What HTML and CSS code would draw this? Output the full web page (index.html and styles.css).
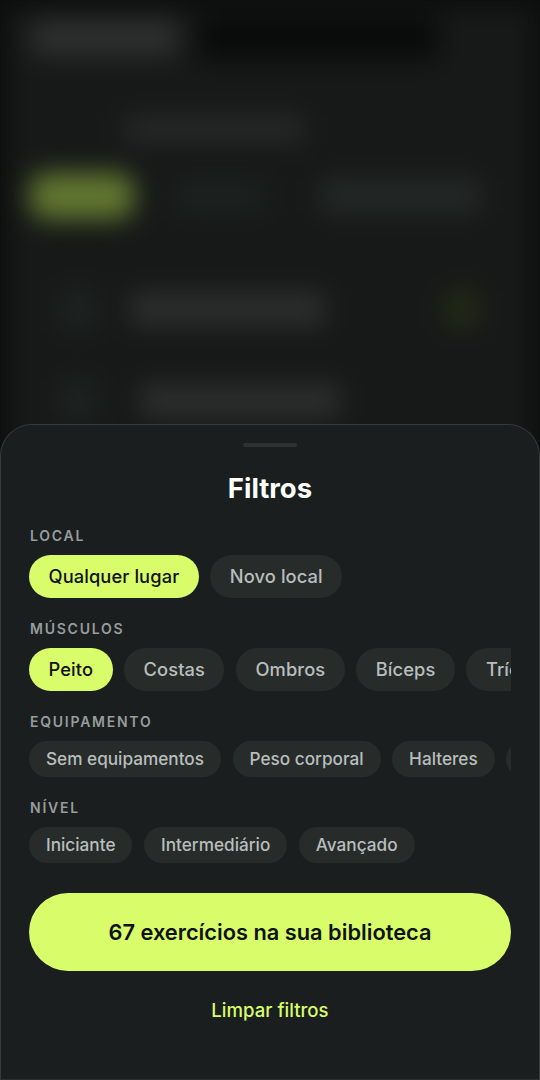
FILE: index.html
```html
<!DOCTYPE html>
<html lang="pt">
<head>
<meta charset="utf-8">
<title>Filtros</title>
<link rel="stylesheet" href="styles.css">
</head>
<body>
<div class="screen">
  <div class="backdrop" aria-hidden="true">
    <div class="bd-head"><span class="bd-title"></span><span class="bd-dark"></span></div>
    <span class="bd-sub"></span>
    <div class="bd-tabs"><span class="bd-tab-on"></span><span class="bd-tab-a"></span><span class="bd-tab-b"></span></div>
    <div class="bd-row"><span class="bd-ico"></span><span class="bd-line"></span><span class="bd-dot"></span></div>
    <div class="bd-row bd-row2"><span class="bd-ico"></span><span class="bd-line bd-line2"></span></div>
  </div>
  <section class="sheet">
    <div class="handle"></div>
    <h1 class="title">Filtros</h1>
    <h2 class="label label-local">LOCAL</h2>
    <div class="chips chips-lg">
      <span class="chip on">Qualquer lugar</span>
      <span class="chip">Novo local</span>
    </div>
    <h2 class="label">MÚSCULOS</h2>
    <div class="chips chips-lg">
      <span class="chip on">Peito</span>
      <span class="chip">Costas</span>
      <span class="chip">Ombros</span>
      <span class="chip">Bíceps</span>
      <span class="chip">Tríceps</span>
    </div>
    <h2 class="label">EQUIPAMENTO</h2>
    <div class="chips chips-sm">
      <span class="chip">Sem equipamentos</span>
      <span class="chip">Peso corporal</span>
      <span class="chip">Halteres</span>
      <span class="chip">Barra</span>
    </div>
    <h2 class="label">NÍVEL</h2>
    <div class="chips chips-sm">
      <span class="chip">Iniciante</span>
      <span class="chip">Intermediário</span>
      <span class="chip">Avançado</span>
    </div>
    <button class="cta">67 exercícios na sua biblioteca</button>
    <a class="clear">Limpar filtros</a>
  </section>
</div>
</body>
</html>
```
FILE: styles.css
```css
* { box-sizing: border-box; }
html, body { margin: 0; padding: 0; background: #0d0f0e; }
body { font-family: "Inter", "Liberation Sans", sans-serif; }
.screen {
  position: relative;
  width: 540px;
  height: 1080px;
  overflow: hidden;
  display: flex;
  flex-direction: column;
  justify-content: flex-end;
  background: #0c0e0d;
}
.backdrop {
  position: absolute;
  inset: -10px;
  padding: 30px 10px 0;
  background: #161918;
  filter: blur(13px);
  box-shadow: inset 0 0 0 16px #0b0d0c;
}
.bd-head { display: flex; height: 36px; gap: 20px; }
.bd-title { width: 146px; margin-left: 32px; background: #2e302f; border-radius: 8px; }
.bd-dark { width: 240px; margin-top: -4px; height: 44px; background: #090b0a; }
.bd-sub { display: block; width: 180px; height: 26px; margin: 60px 0 0 124px; background: #252928; }
.bd-tabs { display: flex; align-items: center; margin-top: 30px; height: 48px; }
.bd-tab-on { width: 104px; height: 46px; margin-left: 30px; border-radius: 16px; background: #627830; }
.bd-tab-a { width: 90px; height: 32px; margin-left: 40px; background: #1c2221; }
.bd-tab-b { width: 160px; height: 32px; margin-left: 56px; background: #242928; }
.bd-row { display: flex; align-items: center; height: 50px; margin-top: 64px; }
.bd-row2 { margin-top: 42px; }
.bd-ico { width: 36px; height: 44px; margin-left: 60px; background: #1d2322; }
.bd-line { width: 195px; height: 34px; margin-left: 34px; background: #2c2e2d; }
.bd-line2 { margin-left: 44px; width: 200px; }
.bd-dot { width: 34px; height: 36px; margin-left: 120px; background: #232b14; }
.sheet {
  position: relative;
  height: 656px;
  padding: 18px 28px 0;
  background: #1a1e1f;
  border: 1px solid #353a3a;
  border-bottom-color: #2a2f2f;
  border-radius: 32px 32px 0 0;
  display: flex;
  flex-direction: column;
  align-items: stretch;
  font-family: "Inter", "Liberation Sans", sans-serif;
}
.handle { align-self: center; width: 54px; height: 4px; border-radius: 2px; background: #2d3233; }
.title { margin: 23px 0 0; height: 36px; text-align: center; color: #fff; font-size: 27.5px; font-weight: 700; line-height: 36px; }
.label { margin: 22px 0 0 1px; color: #979c9c; font-size: 14px; font-weight: 600; letter-spacing: 1.75px; line-height: 18px; }
.label-local { margin-top: 21px; }
.chips { display: flex; overflow: hidden; }
.chips-lg { gap: 11.5px; margin-top: 10px; font-size: 18.3px; letter-spacing: 0.1px; }
.chips-sm { gap: 11.5px; margin-top: 10px; font-size: 17.2px; }
.chip { flex: none; display: block; border-radius: 22px; background: #272c2b; color: #b9bebd; font-weight: 500; white-space: nowrap; }
.chips-lg .chip { height: 43px; padding: 0 19.5px; line-height: 43px; }
.chips-sm .chip { height: 36px; padding: 0 17px; line-height: 36px; }
.chip.on { background: #d9fd6a; color: #111; }
.cta {
  display: block;
  width: 482px;
  height: 78px;
  margin-top: 30px;
  border: 0;
  border-radius: 39px;
  background: #d9fd6a;
  color: #0e1210;
  font-family: inherit;
  font-size: 21.8px;
  font-weight: 600;
}
.clear { display: block; margin-top: 26px; text-align: center; color: #d9fd6a; font-size: 18.6px; font-weight: 500; line-height: 26px; }
```
